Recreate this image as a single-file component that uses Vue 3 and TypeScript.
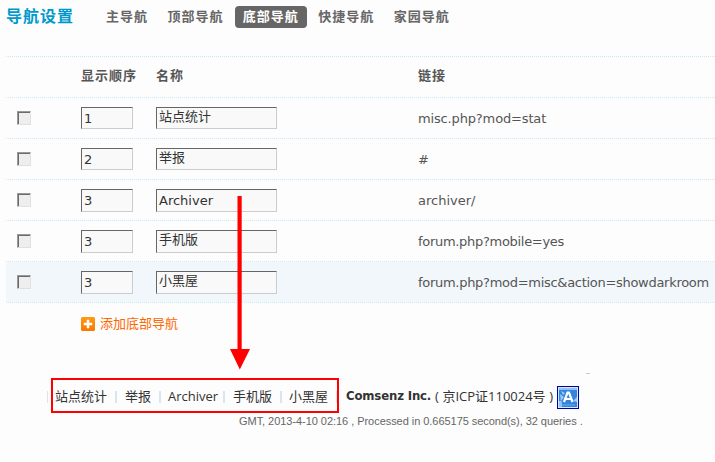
<script setup lang="ts">
interface NavTab {
  label: string
  active?: boolean
}

interface NavRow {
  order: number
  name: string
  link: string
  tracking: number
  latin?: boolean
  tall?: boolean
  hover?: boolean
}

const tabs: NavTab[] = [
  { label: '主导航' },
  { label: '顶部导航' },
  { label: '底部导航', active: true },
  { label: '快捷导航' },
  { label: '家园导航' },
]

const rows: NavRow[] = [
  { order: 1, name: '站点统计', link: 'misc.php?mod=stat', tracking: -0.15 },
  { order: 2, name: '举报', link: '#', tracking: 0 },
  { order: 3, name: 'Archiver', link: 'archiver/', tracking: 0, latin: true, tall: true },
  { order: 3, name: '手机版', link: 'forum.php?mobile=yes', tracking: -0.3, tall: true },
  { order: 3, name: '小黑屋', link: 'forum.php?mod=misc&action=showdarkroom', tracking: -0.29, tall: true, hover: true },
]
</script>

<template>
  <div class="page">
    <header class="head">
      <h1>导航设置</h1>
      <nav class="tabs">
        <a v-for="t in tabs" :key="t.label" class="tab" :class="{ active: t.active }">{{ t.label }}</a>
      </nav>
    </header>

    <section class="grid">
      <div class="row titles">
        <span></span><span>显示顺序</span><span>名称</span><span>链接</span>
      </div>
      <div v-for="r in rows" :key="r.name" class="row" :class="{ hover: r.hover, tall: r.tall }">
        <span class="check"></span>
        <span class="field order">{{ r.order }}</span>
        <span class="field name" :class="{ latin: r.latin }">{{ r.name }}</span>
        <span class="link" :style="{ letterSpacing: r.tracking + 'px' }">{{ r.link }}</span>
      </div>
    </section>

    <a class="add">
      <svg width="14" height="14" viewBox="0 0 14 14">
        <defs>
          <linearGradient id="addFill" x1="0" y1="0" x2="0" y2="1">
            <stop offset="0" stop-color="#ff9a10" />
            <stop offset="1" stop-color="#f97800" />
          </linearGradient>
        </defs>
        <rect width="14" height="14" rx="1.5" fill="url(#addFill)" />
        <path d="M6 3h2v3h3v2H8v3H6V8H3V6h3z" fill="#fff" stroke="#fff" stroke-width=".5" />
      </svg>
      <span>添加底部导航</span>
    </a>

    <div class="dash"></div>

    <footer class="foot">
      <i class="pipe thin"></i>
      <div class="links">
        <span class="l1">站点统计</span><i class="pipe"></i>
        <span class="l2">举报</span><i class="pipe"></i>
        <span class="l3">Archiver</span><i class="pipe"></i>
        <span class="l4">手机版</span><i class="pipe"></i>
        <span class="l5">小黑屋</span><i class="pipe thin"></i>
      </div>
      <strong>Comsenz Inc.</strong>
      <span class="icp"><span>(</span><span>京ICP证110024号</span><span>)</span></span>
      <svg class="badge" width="22" height="23" viewBox="0 0 22 23">
        <rect x=".5" y=".5" width="21" height="22" fill="#d6e9fb" stroke="#0000a8" />
        <rect x="2" y="2" width="18" height="19" fill="#3485dc" />
        <path d="M2 2h18v2H2zM2 15h3v6H2z" fill="#8cc2f3" />
        <path d="M3 8l4 3-3 4zM16 15l4-4v5zM4 5l4 2-2 2z" fill="#9ccbf5" />
        <path d="M7 16L10.500 6.500h1.500L15.500 16M9 13h5" fill="none" stroke="#fff" stroke-width="2.200" />
        <path d="M5 19h13M3 13l2 3" stroke="#6aabed" />
      </svg>
    </footer>
    <p class="debug">GMT, 2013-4-10 02:16 , Processed in 0.665175 second(s), 32 queries .</p>

    <svg class="arrow" width="20" height="174" viewBox="0 0 20 174">
      <path d="M7.500 0h4.200v153H20L9.800 173.500 0 153h7.500z" fill="#f00" />
    </svg>
  </div>
</template>

<style>
body {
  background: #fdfdfd;
}
</style>

<style scoped>
.page {
  position: relative;
  width: 715px;
  height: 462px;
  overflow: hidden;
  font: 13px/20px "DejaVu Sans", "Noto Sans CJK SC", sans-serif;
  color: #555;
}
.head {
  display: flex;
  height: 56px;
  padding-left: 6px;
  box-sizing: border-box;
}
h1 {
  width: 90px;
  margin: 5px 0 0;
  font: bold 16px/20px "Noto Sans CJK SC", sans-serif;
  letter-spacing: 1px;
  color: #0099cc;
}
.tabs {
  display: flex;
  gap: 3.400px;
  margin-top: 6px;
}
.tab {
  height: 22px;
  padding: 0 8px;
  border-radius: 4px;
  font: bold 13px/20px "Noto Sans CJK SC", sans-serif;
  letter-spacing: 1px;
  color: #666;
}
.tab:first-child {
  padding-left: 10px;
}
.tab.active {
  background: #666;
  color: #fff;
}
.grid {
  margin-left: 6px;
}
.row {
  display: grid;
  grid-template-columns: 75px 75px 262px 1fr;
  align-items: center;
  height: 41px;
  box-sizing: border-box;
  background: repeating-linear-gradient(90deg, #cfe7f7 0 1px, #fbfdfe 1px 2px) 0 0 / 100% 1px no-repeat;
}
.row.hover {
  background-color: #f2f7fb;
}
.row:last-child {
  height: 42px;
  padding-bottom: 1px;
  background-image: repeating-linear-gradient(90deg, #cfe7f7 0 1px, #fbfdfe 1px 2px), repeating-linear-gradient(90deg, #cfe7f7 0 1px, #fbfdfe 1px 2px);
  background-position: 0 0, 0 100%;
  background-size: 100% 1px, 100% 1px;
  background-repeat: no-repeat;
}
.titles {
  padding-bottom: 3px;
  font: bold 13px/20px "Noto Sans CJK SC", sans-serif;
  letter-spacing: 1px;
}
.check {
  width: 14px;
  height: 14px;
  box-sizing: border-box;
  margin: 0 0 0 11px;
  border: 1px solid;
  border-color: #999 #e0e0e0 #e0e0e0 #999;
  box-shadow: inset 1px 1px #6b6b6b;
  background: #eee;
}
.field {
  height: 22px;
  margin-top: 1px;
  box-sizing: border-box;
  border: 1px solid;
  border-color: #666 #ccc #ccc #666;
  background: #f9f9f9;
  color: #333;
}
.tall .field {
  height: 23px;
  margin-top: 2px;
}
.order {
  width: 52px;
  padding-left: 2px;
  line-height: 21px;
}
.name {
  width: 121px;
  padding-left: 2px;
  font: 13px/15px "Noto Sans CJK SC", sans-serif;
}
.name.latin {
  font: 13px/21px "DejaVu Sans", sans-serif;
}
.link {
  padding-top: 3px;
  white-space: nowrap;
}
.add {
  display: flex;
  align-items: center;
  gap: 5px;
  height: 20px;
  margin: 11px 0 0 81px;
  font-family: "Noto Sans CJK SC", sans-serif;
  color: #f60;
}
.add span {
  margin-top: -2px;
}
.dash {
  width: 4px;
  height: 1px;
  margin: 39px 0 0 586px;
  background: #ccc;
}
.foot {
  display: flex;
  align-items: center;
  height: 35px;
  margin: 4px 0 1px;
  padding-left: 47px;
  font-family: "Open Sans", "Noto Sans CJK SC", sans-serif;
  color: #333;
  white-space: nowrap;
}
.pipe {
  flex: none;
  width: 2px;
  height: 12px;
  margin-top: 2px;
  background: #d9e6f1;
}
.pipe.thin {
  width: 1px;
}
.links {
  display: flex;
  flex: none;
  align-items: center;
  width: 288px;
  height: 35px;
  margin-left: 3px;
  box-sizing: border-box;
  border: 2px solid #f00;
}
.links span {
  flex: none;
  box-sizing: border-box;
}
.l1 { width: 62px; padding-left: 2px; }
.l2 { width: 42px; padding-left: 8px; }
.l3 { width: 62px; padding-left: 7px; }
.l4 { width: 55px; padding-left: 8px; }
.l5 { width: 54px; padding-left: 7px; }
strong {
  flex: none;
  width: 89px;
  margin-left: 7px;
  font: bold 13px/20px "DejaVu Sans Condensed", "DejaVu Sans", sans-serif;
  letter-spacing: -0.15px;
}
.icp {
  display: flex;
  flex: none;
  justify-content: space-between;
  width: 118px;
}
.badge {
  flex: none;
  margin: 4px 0 0 4px;
}
.debug {
  margin: -2px 0 0 239px;
  font: 11px/18px "Liberation Sans", sans-serif;
  letter-spacing: -0.045px;
  color: #666;
  white-space: nowrap;
}
.arrow {
  position: absolute;
  left: 230px;
  top: 196px;
}
</style>
